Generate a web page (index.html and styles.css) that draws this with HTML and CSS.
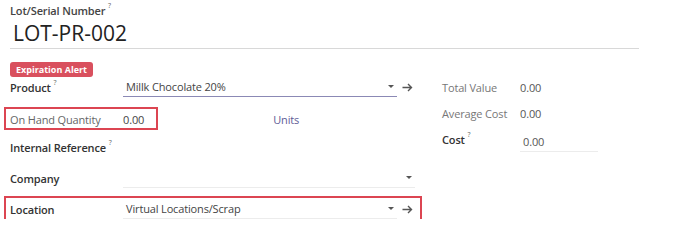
FILE: index.html
```html
<!DOCTYPE html>
<html lang="en">
<head>
    <meta charset="UTF-8">
    <title>Lot/Serial Number</title>
    <link rel="stylesheet" href="styles.css">
</head>
<body>

    <div class="sheet">
        <div class="title-label">Lot/Serial Number <sup>?</sup></div>
        <div class="title-input">LOT-PR-002</div>

        <span class="badge">Expiration Alert</span>

        <div class="groups">
            <!-- left group -->
            <div class="group-left">
                <div class="row row-product">
                    <div class="label">Product <sup>?</sup></div>
                    <div class="field field-focus">
                        <span>Millk Chocolate 20%</span>
                        <span class="caret"></span>
                    </div>
                    <div class="arrow">
                        <svg width="11" height="9" viewBox="0 0 11 9"><path d="M0.5 4.5H9.5M6 1L9.5 4.5L6 8" fill="none" stroke="#555" stroke-width="1.4"/></svg>
                    </div>
                </div>

                <div class="row row-onhand">
                    <div class="highlight hl-onhand"></div>
                    <div class="label label-light">On Hand Quantity</div>
                    <div class="value">0.00</div>
                    <div class="units">Units</div>
                </div>

                <div class="row row-ref">
                    <div class="label">Internal Reference <sup>?</sup></div>
                </div>

                <div class="row row-company">
                    <div class="label">Company</div>
                    <div class="field field-wide">
                        <span></span>
                        <span class="caret"></span>
                    </div>
                </div>

                <div class="row row-location">
                    <div class="highlight hl-location"></div>
                    <div class="label">Location</div>
                    <div class="field">
                        <span>Virtual Locations/Scrap</span>
                        <span class="caret"></span>
                    </div>
                    <div class="arrow">
                        <svg width="11" height="9" viewBox="0 0 11 9"><path d="M0.5 4.5H9.5M6 1L9.5 4.5L6 8" fill="none" stroke="#555" stroke-width="1.4"/></svg>
                    </div>
                </div>
            </div>

            <!-- right group -->
            <div class="group-right">
                <div class="rrow">
                    <div class="rlabel">Total Value</div>
                    <div class="rvalue">0.00</div>
                </div>
                <div class="rrow">
                    <div class="rlabel">Average Cost</div>
                    <div class="rvalue">0.00</div>
                </div>
                <div class="rrow rrow-cost">
                    <div class="rlabel rlabel-dark">Cost <sup>?</sup></div>
                    <div class="cost-input">0.00</div>
                </div>
            </div>
        </div>
    </div>

</body>
</html>
```

FILE: styles.css
```css
body {
    margin: 0;
    font-family: "Open Sans", "Liberation Sans", sans-serif;
    font-size: 11px;
    letter-spacing: -0.15px;
    color: #4c4c4c;
    background: white;
}

sup {
    font-size: 7px;
    font-weight: 400;
    color: #666;
    vertical-align: top;
    position: relative;
    top: -2px;
}

.sheet {
    padding: 3px 0 0 10px;
    width: 629px;
}

.title-label {
    font-weight: 600;
    color: #444;
    height: 16px;
}

.title-input {
    font-size: 21px;
    letter-spacing: 0;
    color: #222;
    padding-left: 3px;
    height: 29px;
    line-height: 29px;
    border-bottom: 1px solid #d8d8d8;
}

.badge {
    display: inline-block;
    margin-top: 13px;
    background: #d9505e;
    color: white;
    font-weight: 700;
    font-size: 9px;
    letter-spacing: 0;
    padding: 0 6px;
    height: 15px;
    line-height: 15px;
    border-radius: 3px;
}

.groups {
    display: flex;
}

.group-left {
    width: 405px;
}

.row {
    position: relative;
    display: flex;
    align-items: center;
    height: 20px;
}

.row-product { margin-top: 0; }
.row-onhand { margin-top: 12px; }
.row-ref { margin-top: 8px; }
.row-company { margin-top: 11px; }
.row-location { margin-top: 11px; }

.label {
    width: 113px;
    flex-shrink: 0;
    white-space: nowrap;
    font-weight: 600;
    color: #333;
}

.label-light {
    font-weight: 400;
    color: #666;
}

.field {
    width: 274px;
    display: flex;
    justify-content: space-between;
    align-items: center;
    height: 20px;
    border-bottom: 1px solid #ececec;
    padding-left: 3px;
    box-sizing: border-box;
    color: #444;
}

.field-focus {
    border-bottom-color: #8b89b5;
}

.field-wide {
    width: 292px;
}

.caret {
    width: 0;
    height: 0;
    border-left: 3px solid transparent;
    border-right: 3px solid transparent;
    border-top: 3px solid #555;
    margin-right: 3px;
}

.arrow {
    width: 16px;
    display: flex;
    justify-content: flex-end;
}

.value {
    color: #444;
}

.units {
    margin-left: 129px;
    color: #5e5c96;
}

.highlight {
    position: absolute;
    left: -6px;
    border: 2px solid #dc4552;
    box-sizing: border-box;
}

.hl-onhand {
    top: -2px;
    width: 154px;
    height: 23px;
}

.hl-location {
    top: -3px;
    width: 418px;
    height: 29px;
}

.group-right {
    margin-left: 27px;
}

.rrow {
    display: flex;
    align-items: center;
    height: 20px;
    margin-bottom: 6px;
}

.rlabel {
    width: 78px;
    color: #777;
}

.rlabel-dark {
    color: #333;
    font-weight: 600;
}

.rvalue {
    color: #555;
}

.cost-input {
    width: 75px;
    padding-left: 3px;
    height: 20px;
    line-height: 22px;
    border-bottom: 1px solid #ececec;
    margin-top: 4px;
    color: #555;
}
```
